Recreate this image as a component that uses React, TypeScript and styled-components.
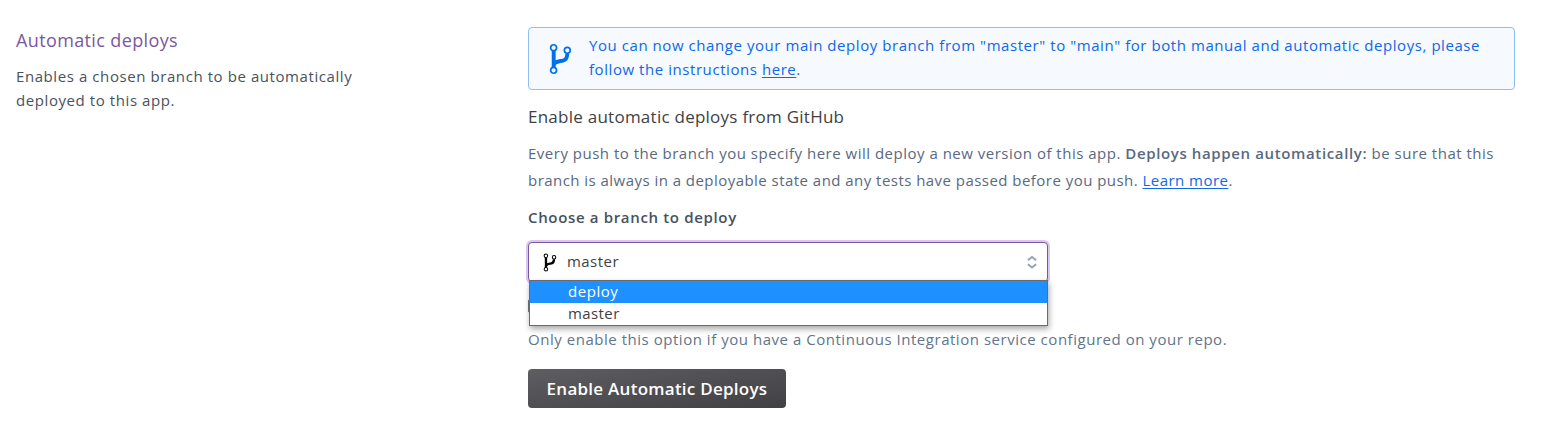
import React from "react";
import styled, { createGlobalStyle } from "styled-components";

const GlobalStyle = createGlobalStyle`
  * { box-sizing: border-box; }
  body { margin: 0; background: #fff; font-family: "Open Sans", "Noto Sans", sans-serif; font-size: 15px; color: #3f3f44; }
  h2, h3, p { margin: 0; font-weight: 400; }
`;

const Page = styled.main`
  display: grid;
  grid-template-columns: 512px 987px;
  padding: 27px 0 0 16px;
`;
const Summary = styled.section`
  padding-right: 150px;
`;
const Title = styled.h2`
  font-size: 18px;
  line-height: 27px;
  color: #79589f;
`;
const Line = styled.span<{ $track?: number }>`
  display: block;
  white-space: nowrap;
  letter-spacing: ${(p) => p.$track ?? 0}px;
`;
const Description = styled.p`
  margin-top: 10px;
  line-height: 24px;
  color: #475260;
`;
const Content = styled.section`
  display: flex;
  flex-direction: column;
  align-items: flex-start;
`;
const Notice = styled.div`
  display: flex;
  width: 100%;
  height: 63px;
  padding: 5px 0 0 20px;
  border: 1px solid #8fbff3;
  border-radius: 4px;
  background: #f6f9fe;
  color: #1068e6;
  line-height: 24px;
`;
const NoticeIcon = styled.span`
  width: 40px;
  padding-top: 10px;
  color: #0070ee;
`;
const Link = styled.a`
  color: #0f69e8;
  text-decoration: underline;
  text-underline-offset: 2px;
  text-decoration-thickness: 1px;
`;
const Heading = styled.h3`
  margin-top: 14px;
  font-size: 17px;
  line-height: 26px;
`;
const Body = styled.p`
  margin-top: 10px;
  line-height: 27px;
  color: #596981;
`;
const Strong = styled.b`
  font-weight: 600;
  letter-spacing: 0.63px;
`;
const Label = styled.label`
  margin-top: 11px;
  line-height: 24px;
  font-weight: 600;
  color: #475260;
`;
const Picker = styled.div`
  position: relative;
  width: 520px;
  margin-top: 13px;
`;
const Select = styled.div`
  display: flex;
  align-items: center;
  height: 40px;
  padding: 0 10px 0 14px;
  border: 1px solid #79589f;
  border-radius: 4px;
  box-shadow: 0 0 0 2px #d9c7ed;
  background: #fff;
`;
const SelectIcon = styled.span`
  color: #000;
`;
const Value = styled.span`
  flex: 1;
  margin: 0 0 2px 10px;
`;
const Menu = styled.div`
  position: absolute;
  z-index: 1;
  top: 38px;
  left: 1px;
  width: 519px;
  height: 46px;
  border: 1px solid #6b6b6b;
  background: #fff;
  box-shadow: 1px 3px 6px rgba(0, 0, 0, 0.35);
`;
const Option = styled.div<{ $active?: boolean }>`
  height: 22px;
  padding-left: 38px;
  line-height: 20px;
  background: ${(p) => (p.$active ? "#1e90ff" : "#fff")};
  color: ${(p) => (p.$active ? "#fff" : "#3f3f44")};
`;
const Checkbox = styled.span`
  width: 14px;
  height: 14px;
  margin-top: 17px;
  border: 1px solid #767676;
  border-radius: 2px;
`;
const Hint = styled.p`
  margin-top: 14px;
  line-height: 24px;
  color: #62758c;
`;
const Button = styled.button`
  width: 258px;
  height: 39px;
  margin-top: 18px;
  padding: 0;
  border: 0;
  border-radius: 4px;
  background: linear-gradient(to bottom right, #5e5d62, #414044);
  color: #fff;
  font: 600 17px/39px "Open Sans", "Noto Sans", sans-serif;
  letter-spacing: 0.26px;
  white-space: nowrap;
`;

const Branch = ({ width, height }: { width: number; height: number }) => (
  <svg width={width} height={height} viewBox="0 0 23 32" fill="none" stroke="currentColor" display="block">
    <path d="M4.7 7.5V24.5M18.3 10.5C18.2 15 16.8 17 14 17.6C10 18.4 6 18 4.8 21.8" strokeWidth="3.9" />
    <circle cx="4.6" cy="4.7" r="2.95" strokeWidth="1.7" />
    <circle cx="18.3" cy="7.3" r="2.95" strokeWidth="1.7" />
    <circle cx="4.6" cy="27.3" r="2.95" strokeWidth="1.7" />
  </svg>
);

const Chevrons = () => (
  <svg width="10" height="14" viewBox="0 0 10 14" fill="none" stroke="#96a3b6" strokeWidth="2" display="block">
    <path d="M.9 5.3 5 2l4.1 3.3M.9 9.2 5 12.5l4.1-3.3" />
  </svg>
);

export default function App() {
  return (
    <>
      <GlobalStyle />
      <Page>
        <Summary>
          <Title><Line $track={0.37}>Automatic deploys</Line></Title>
          <Description>
            <Line $track={0.58}>Enables a chosen branch to be automatically</Line>
            <Line $track={0.58}>deployed to this app.</Line>
          </Description>
        </Summary>
        <Content>
          <Notice>
            <NoticeIcon><Branch width={23} height={32} /></NoticeIcon>
            <p>
              <Line $track={0.56}>You can now change your main deploy branch from "master" to "main" for both manual and automatic deploys, please</Line>
              <Line $track={0.56}>follow the instructions <Link>here</Link>.</Line>
            </p>
          </Notice>
          <Heading><Line $track={0.25}>Enable automatic deploys from GitHub</Line></Heading>
          <Body>
            <Line $track={0.5}>Every push to the branch you specify here will deploy a new version of this app. <Strong>Deploys happen automatically:</Strong> be sure that this</Line>
            <Line $track={0.46}>branch is always in a deployable state and any tests have passed before you push. <Link>Learn more</Link>.</Line>
          </Body>
          <Label><Line $track={0.66}>Choose a branch to deploy</Line></Label>
          <Picker>
            <Select>
              <SelectIcon><Branch width={14} height={19} /></SelectIcon>
              <Value><Line $track={0.45}>master</Line></Value>
              <Chevrons />
            </Select>
            <Menu>
              <Option $active><Line $track={0.55}>deploy</Line></Option>
              <Option><Line $track={0.4}>master</Line></Option>
            </Menu>
          </Picker>
          <Checkbox />
          <Hint><Line $track={0.53}>Only enable this option if you have a Continuous Integration service configured on your repo.</Line></Hint>
          <Button>Enable Automatic Deploys</Button>
        </Content>
      </Page>
    </>
  );
}
